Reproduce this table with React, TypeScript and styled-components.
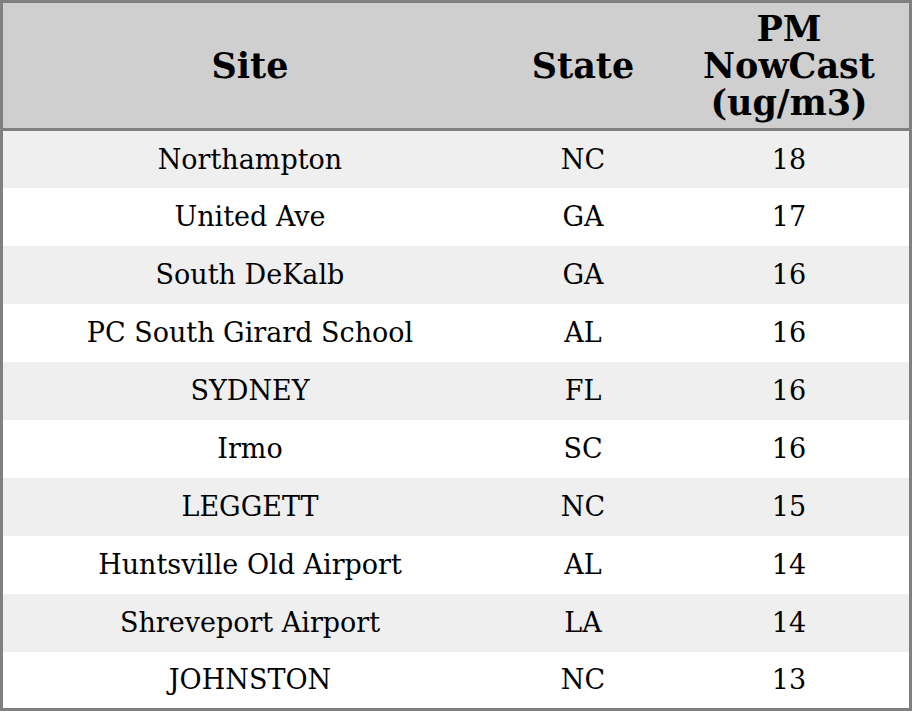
import React from "react";
import styled, { createGlobalStyle } from "styled-components";

const GlobalStyle = createGlobalStyle`
  html, body {
    margin: 0;
    padding: 0;
    background: #ffffff;
  }
`;

const Table = styled.table`
  width: 912px;
  height: 711px;
  border-collapse: collapse;
  border: 3px solid #808080;
  font-family: "DejaVu Serif", serif;
  color: #000;
  table-layout: fixed;
`;

const HeadRow = styled.tr`
  background: #cfcfcf;
  height: 128px;
  border-bottom: 3px solid #808080;
`;

const Th = styled.th<{ $w: number }>`
  width: ${(p) => p.$w}px;
  font-size: 35px;
  font-weight: bold;
  line-height: 37px;
  text-align: center;
  padding: 0;
`;

const Row = styled.tr<{ $striped: boolean }>`
  background: ${(p) => (p.$striped ? "#efefef" : "#ffffff")};
  height: 58px;
`;

const Td = styled.td`
  font-size: 27px;
  text-align: center;
  padding: 0;
`;

const rows = [
  ["Northampton", "NC", "18"],
  ["United Ave", "GA", "17"],
  ["South DeKalb", "GA", "16"],
  ["PC South Girard School", "AL", "16"],
  ["SYDNEY", "FL", "16"],
  ["Irmo", "SC", "16"],
  ["LEGGETT", "NC", "15"],
  ["Huntsville Old Airport", "AL", "14"],
  ["Shreveport Airport", "LA", "14"],
  ["JOHNSTON", "NC", "13"],
];

export default function App() {
  return (
    <>
      <GlobalStyle />
      <Table>
        <thead>
          <HeadRow>
            <Th $w={494}>Site</Th>
            <Th $w={172}>State</Th>
            <Th $w={240}>
              PM
              <br />
              NowCast
              <br />
              (ug/m3)
            </Th>
          </HeadRow>
        </thead>
        <tbody>
          {rows.map((r, i) => (
            <Row key={i} $striped={i % 2 === 0}>
              {r.map((c, j) => (
                <Td key={j}>{c}</Td>
              ))}
            </Row>
          ))}
        </tbody>
      </Table>
    </>
  );
}
